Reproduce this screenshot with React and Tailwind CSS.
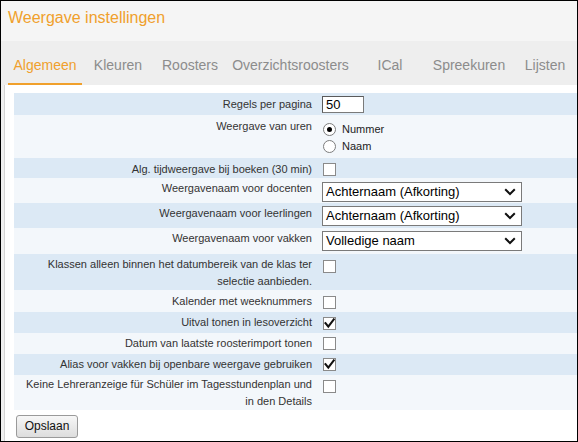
import React from "react";

function Check({ checked, mt }) {
  return (
    <div className={`ml-[1px] ${mt} w-[13px] h-[13px] border border-[#8a8a8a] bg-white flex items-center justify-center`}>
      {checked && (
        <svg width="11" height="11" viewBox="0 0 11 11">
          <path d="M1.5 5.2 L4.3 8.6 L9.8 1.4" stroke="#111" strokeWidth="2.1" fill="none" strokeLinecap="square" />
        </svg>
      )}
    </div>
  );
}

function Radio({ checked, label }) {
  return (
    <div className="flex items-center h-[17px]">
      <div className="ml-[1px] w-[13px] h-[13px] rounded-full border border-[#7d7d7d] bg-white flex items-center justify-center">
        {checked && <div className="w-[5px] h-[5px] rounded-full bg-black" />}
      </div>
      <span className="ml-[6px] text-[11px] text-[#222]">{label}</span>
    </div>
  );
}

function Select({ value, mt }) {
  return (
    <div className={`${mt} w-[200px] h-[20px] border border-[#7a7a7a] bg-white flex items-center justify-between pl-[3px] pr-[5px]`}>
      <span className="text-[13px] leading-[18px] text-black">{value}</span>
      <svg width="12" height="8" viewBox="0 0 12 8">
        <path d="M1.2 1.3 L6 6 L10.8 1.3" stroke="#111" strokeWidth="2" fill="none" />
      </svg>
    </div>
  );
}

function Row({ h, bg, lpt, label, children }) {
  return (
    <div className={`flex ${h} ${bg}`}>
      <div className={`w-[303px] shrink-0 pr-[5px] text-right text-[11px] leading-[17px] text-[#333] whitespace-nowrap ${lpt}`}>
        {label}
      </div>
      <div className="pl-[5px] flex flex-col items-start">{children}</div>
    </div>
  );
}

const BLUE = "bg-[#dce9f5]";
const LIGHT = "bg-[#f3f7fb]";

export default function App() {
  return (
    <div className="w-[578px] h-[442px] border border-black bg-white flex flex-col font-['Liberation_Sans',Arial,sans-serif] overflow-hidden">
      <div className="h-[40px] shrink-0 bg-[#f5f5f5] pl-[7px] pt-[8px]">
        <div className="text-[16px] leading-[18px] text-[#f0a02c]">Weergave instellingen</div>
      </div>
      <div className="h-[44px] shrink-0 bg-[#eeeeee] pl-[7px] flex items-start text-[14px] leading-[16px] text-[#8c8c8c]">
        <div className="w-[74px] pt-[16px] pb-[10px] text-center text-[#f0a02c] border-b-2 border-[#f0a02c]">Algemeen</div>
        <div className="w-[72px] pt-[16px] text-center">Kleuren</div>
        <div className="w-[72px] pt-[16px] text-center">Roosters</div>
        <div className="w-[129px] pt-[16px] text-center">Overzichtsroosters</div>
        <div className="w-[70px] pt-[16px] text-center">ICal</div>
        <div className="w-[88px] pt-[16px] text-center">Spreekuren</div>
        <div className="w-[64px] pt-[16px] text-center">Lijsten</div>
      </div>
      <div className="flex-1 flex">
        <div className="w-[4px] shrink-0 bg-[#f0f0f0] border-r border-[#d4d4d4]" />
        <div className="flex-1 pl-[9px] pt-[8px] flex flex-col">
          <Row h="h-[22px]" bg={BLUE} lpt="pt-[3px]" label="Regels per pagina">
            <input
              defaultValue="50"
              className="mt-[3px] w-[42px] h-[17px] border border-[#7a7a7a] border-t-[#5a5a5a] border-l-[#5a5a5a] bg-white text-[13px] leading-[15px] pl-[3px] text-black outline-none font-['Liberation_Sans',Arial,sans-serif]"
            />
          </Row>
          <Row h="h-[43px]" bg={LIGHT} lpt="pt-[3px]" label="Weergave van uren">
            <div className="pt-[6px] flex flex-col">
              <Radio checked label="Nummer" />
              <Radio label="Naam" />
            </div>
          </Row>
          <Row h="h-[20px]" bg={BLUE} lpt="pt-[3px]" label="Alg. tijdweergave bij boeken (30 min)">
            <Check mt="mt-[5px]" />
          </Row>
          <Row h="h-[25px]" bg={LIGHT} lpt="pt-[2px]" label="Weergavenaam voor docenten">
            <Select mt="mt-[4px]" value="Achternaam (Afkorting)" />
          </Row>
          <Row h="h-[25px]" bg={BLUE} lpt="pt-[2px]" label="Weergavenaam voor leerlingen">
            <Select mt="mt-[3px]" value="Achternaam (Afkorting)" />
          </Row>
          <Row h="h-[26px]" bg={LIGHT} lpt="pt-[2px]" label="Weergavenaam voor vakken">
            <Select mt="mt-[3px]" value="Volledige naam" />
          </Row>
          <Row
            h="h-[36px]"
            bg={BLUE}
            lpt="pt-[2px]"
            label={<>Klassen alleen binnen het datumbereik van de klas ter<br />selectie aanbieden.</>}
          >
            <Check mt="mt-[6px]" />
          </Row>
          <Row h="h-[22px]" bg={LIGHT} lpt="pt-[3px]" label="Kalender met weeknummers">
            <Check mt="mt-[6px]" />
          </Row>
          <Row h="h-[21px]" bg={BLUE} lpt="pt-[2px]" label="Uitval tonen in lesoverzicht">
            <Check checked mt="mt-[5px]" />
          </Row>
          <Row h="h-[21px]" bg={LIGHT} lpt="pt-[2px]" label="Datum van laatste roosterimport tonen">
            <Check mt="mt-[4px]" />
          </Row>
          <Row h="h-[21px]" bg={BLUE} lpt="pt-[2px]" label="Alias voor vakken bij openbare weergave gebruiken">
            <Check checked mt="mt-[4px]" />
          </Row>
          <Row
            h="h-[35px]"
            bg={LIGHT}
            lpt="pt-[1px]"
            label={<>Keine Lehreranzeige für Schüler im Tagesstundenplan und<br />in den Details</>}
          >
            <Check mt="mt-[5px]" />
          </Row>
          <div className="pt-[3px] pl-[2px]">
            <button className="w-[62px] h-[23px] border border-[#9a9a9a] rounded-[3px] bg-gradient-to-b from-[#f7f7f7] to-[#dddddd] text-[12px] text-[#111]">
              Opslaan
            </button>
          </div>
        </div>
      </div>
    </div>
  );
}
